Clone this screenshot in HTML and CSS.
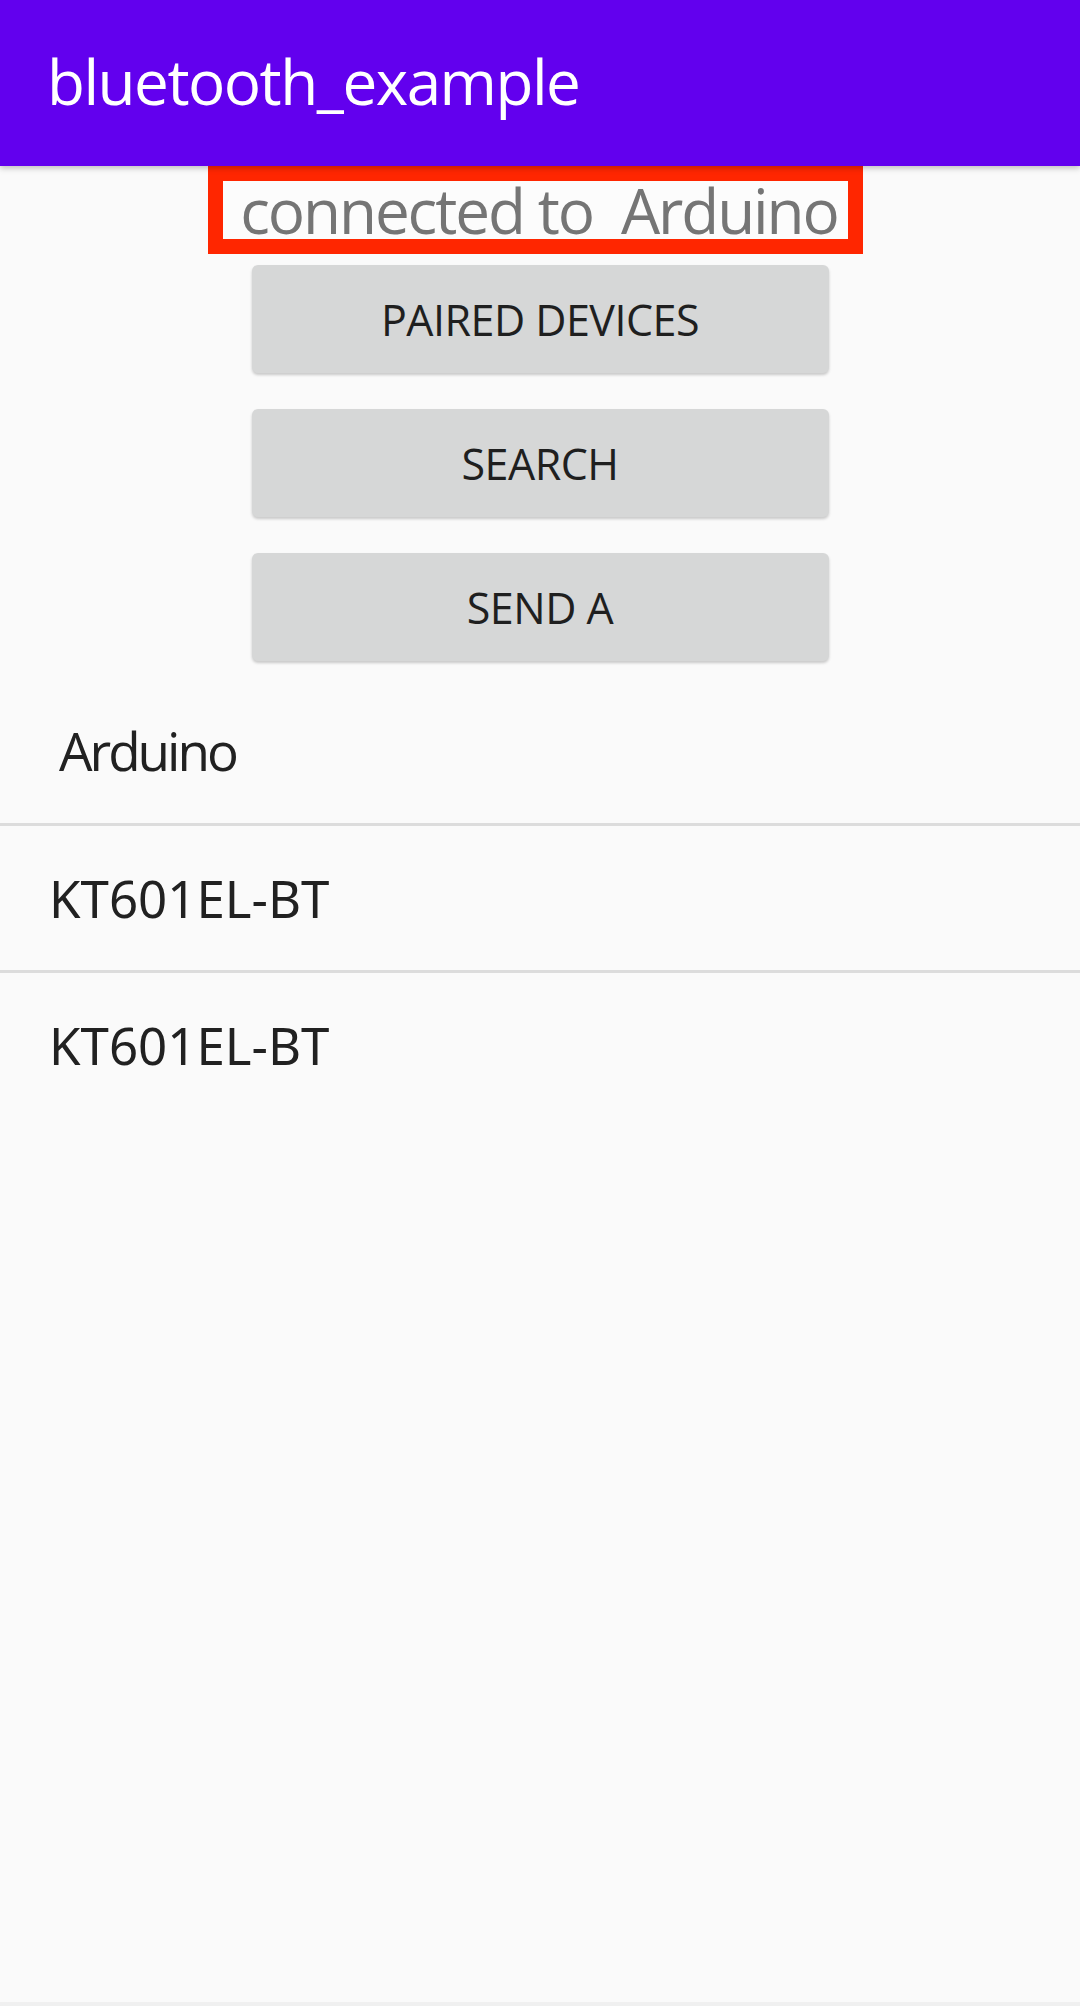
FILE: index.html
```html
<!DOCTYPE html>
<html>
<head>
<meta name="viewport" content="width=device-width, initial-scale=1.0">
<title>bluetooth_example</title>
<link rel="stylesheet" href="styles.css">
</head>
<body>
	<div class="appbar">
		<span class="title">bluetooth_example</span>
	</div>
	<div class="content">
		<div class="status">
			<span class="status-text">connected to&nbsp; Arduino</span>
		</div>
		<div class="buttons">
			<button class="btn">PAIRED DEVICES</button>
			<button class="btn">SEARCH</button>
			<button class="btn">SEND A</button>
		</div>
		<ul class="devices">
			<li class="device device-first">Arduino</li>
			<li class="device">KT601EL-BT</li>
			<li class="device">KT601EL-BT</li>
		</ul>
	</div>
	<div class="navline"></div>
</body>
</html>
```

FILE: styles.css
```css
html, body {
	margin: 0;
	padding: 0;
}
body {
	background-color: #fafafa;
	font-family: "Open Sans", "Noto Sans", sans-serif;
	color: #212121;
	height: 2006px;
	display: flex;
	flex-direction: column;
	overflow: hidden;
}

.appbar {
	height: 166px;
	flex: none;
	background-color: #6200ee;
	display: flex;
	align-items: center;
	padding-left: 47px;
	box-shadow: 0 2px 6px rgba(0,0,0,0.25);
	position: relative;
	z-index: 1;
}
.appbar .title {
	color: #fff;
	font-size: 62px;
	letter-spacing: -1.5px;
	margin-top: -4px;
}

.content {
	flex: 1;
}

.status {
	display: flex;
	justify-content: center;
}
.status .status-text {
	display: block;
	margin-left: -9px;
	border: 15px solid #ff2600;
	background-color: #fcfcfc;
	height: 58px;
	line-height: 58px;
	padding: 0 10px 0 17px;
	font-size: 62px;
	letter-spacing: -2.1px;
	color: #757575;
	white-space: pre;
}

.buttons {
	display: flex;
	flex-direction: column;
	align-items: center;
	gap: 36px;
	margin-top: 11px;
}
.btn {
	width: 577px;
	height: 108px;
	border: none;
	border-radius: 6px;
	background-color: #d6d7d7;
	box-shadow: 0 2px 3px rgba(0,0,0,0.2);
	font-family: "Open Sans", "Noto Sans", sans-serif;
	font-size: 43px;
	letter-spacing: -0.5px;
	color: #1f1f1f;
	padding: 0;
}

.devices {
	list-style: none;
	margin: 18px 0 0 0;
	padding: 0;
}
.device {
	height: 144px;
	line-height: 144px;
	padding-left: 49px;
	font-family: "Noto Sans", sans-serif;
	font-size: 51px;
	border-bottom: 3px solid #dcdcdc;
}
.device:last-child {
	border-bottom: none;
}
.device-first {
	padding-left: 59px;
	font-family: "Open Sans", "Noto Sans", sans-serif;
	font-size: 53px;
	letter-spacing: -3px;
}

.navline {
	height: 4px;
	flex: none;
	background-color: #f0f0f0;
}
```
